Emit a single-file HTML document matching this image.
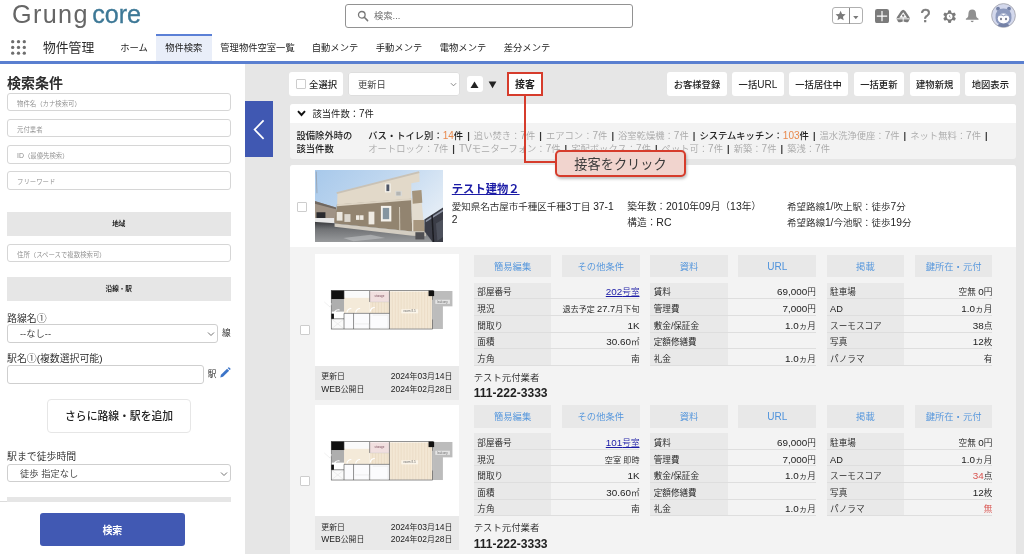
<!DOCTYPE html>
<html lang="ja">
<head>
<meta charset="utf-8">
<title>物件管理</title>
<style>
*{box-sizing:border-box;margin:0;padding:0}
html,body{width:1024px;height:554px;overflow:hidden;background:#fff}
body{font-family:"Liberation Sans","Noto Sans CJK JP",sans-serif;color:#222;font-size:9.3px;position:relative;font-weight:350}
.abs{position:absolute}
/* header */
#logo{left:11.9px;top:-1.1px;font-size:25.2px;letter-spacing:1.4px;color:#666;white-space:nowrap;line-height:30px}
#logo b{font-weight:normal;color:#3d7896;-webkit-text-stroke:0.3px #3d7896;margin-left:3.4px;letter-spacing:-0.1px}
#search{left:345px;top:4px;width:288px;height:23.5px;border:1px solid #929292;border-radius:3px;background:#fff}
#search span{position:absolute;left:28px;top:5px;font-size:9.3px;color:#666;line-height:12px}
#nav{left:0;top:34px;width:1024px;height:27px;white-space:nowrap}
#nav .app{position:absolute;left:43px;top:3.5px;font-size:12.8px;line-height:20px;color:#2a2a2a;font-weight:400}
#nav .tab{position:absolute;top:0;height:27px;line-height:29px;font-size:9.3px;color:#222;font-weight:400;text-align:center}
#nav .tab.act{background:#e9eef9;border-top:2px solid #5b80d6;line-height:25px}
#blueline{left:0;top:60.5px;width:1024px;height:3.2px;background:#5a7fd0}
/* left */
#left{left:0;top:63.5px;width:245px;height:491px;background:#fff}
#main{left:245px;top:63.5px;width:779px;height:491px;background:#e6e6e6}
.inp{position:absolute;left:7px;width:223.5px;height:18.4px;border:1px solid #d6d6d6;border-radius:3px;background:#fff;font-size:6.4px;color:#8a8a8a;line-height:19.8px;padding-left:9px}
.ghead{position:absolute;left:7px;width:223.5px;height:23.7px;background:#e6e6e6;text-align:center;font-size:6.6px;font-weight:bold;line-height:23.7px;color:#222}
.lbl{position:absolute;left:7px;font-size:9.9px;line-height:13px;color:#222;white-space:nowrap}
.sel{position:absolute;left:7px;height:17.8px;border:1px solid #cfcfcf;border-radius:3px;background:#fff;font-size:9.3px;line-height:15.8px;color:#333;padding-left:12px}
.chev{position:absolute;right:2.2px;top:5.2px;width:8px;height:8px}
/* main */
.btn{position:absolute;top:72.3px;height:23.7px;background:#fff;border-radius:3px;font-size:9.3px;font-weight:500;color:#222;text-align:center;line-height:26.5px;white-space:nowrap}
.panel{position:absolute;left:289.6px;width:726px}
.cb{position:absolute;width:10px;height:10px;border:1px solid #cdcdcd;background:#fff;border-radius:1px}
.rb{position:absolute;width:77.8px;height:22.3px;background:#e8e8e8;color:#4f93dc;font-size:9.3px;text-align:center;line-height:24.3px;white-space:nowrap}
.tbl{position:absolute;width:165.8px}
.tbl .r{position:relative;height:16.65px;border-bottom:1px solid #dedede;line-height:15.6px;font-size:8.6px;color:#222;white-space:nowrap}
.tbl .r .k{position:absolute;left:0;top:0;width:77.8px;height:15.65px;background:#e9e9e9;padding-left:3.6px;padding-top:2.7px}
.tbl .r .v{position:absolute;right:0;top:0;text-align:right;padding-top:2.7px}
a.lk{color:#1b1ba6;text-decoration:underline}
.red{color:#d9534f}
.org{color:#e8884c}
.l{font-size:1.08em;line-height:1}
.tbl .v .l{font-size:1.15em}
.gry{color:#a9a9a9}
.gry i{font-style:normal;color:#333;font-weight:bold}
.k2{color:#222;font-weight:500}
</style>
</head>
<body>
<div id="root" style="position:absolute;left:0;top:0;width:1024px;height:554px;overflow:hidden;will-change:transform">
<!-- HEADER -->
<div id="logo" class="abs">Grung<b>core</b></div>
<div id="search" class="abs">
<svg class="abs" style="left:11px;top:5px" width="12" height="12" viewBox="0 0 12 12"><circle cx="4.8" cy="4.8" r="3.3" fill="none" stroke="#777" stroke-width="1.3"/><path d="M7.3 7.3 L10.6 10.6" stroke="#777" stroke-width="1.5" stroke-linecap="round"/></svg>
<span>検索...</span></div>
<div class="abs" style="left:832.3px;top:7.4px;width:30.6px;height:17.1px;border:1px solid #b0b0b0;border-radius:3px;background:#fff"></div>
<div class="abs" style="left:849px;top:7.6px;width:1px;height:16.6px;background:#8a8a8a"></div>
<svg class="abs" style="left:835.3px;top:10.3px" width="11.2" height="11.2" viewBox="0 0 24 24"><path d="M12 1.5 L15.1 8.6 L22.8 9.3 L17 14.4 L18.7 22 L12 18 L5.3 22 L7 14.4 L1.2 9.3 L8.9 8.6 Z" fill="#7a7a7a"/></svg>
<svg class="abs" style="left:853.2px;top:15.6px" width="5.6" height="3.2" viewBox="0 0 10 6"><path d="M0 0 H10 L5 6 Z" fill="#7a7a7a"/></svg>
<svg class="abs" style="left:874.5px;top:8.8px" width="14" height="14.2" viewBox="0 0 14 14"><rect width="14" height="14" rx="2.2" fill="#7b7b7b"/><path d="M7 1.8 V12.2 M1.8 7 H12.200" stroke="#fff" stroke-width="1.2"/></svg>
<svg class="abs" style="left:896px;top:9px" width="14.4" height="14" viewBox="0 0 28 27"><path d="M14 1.2 Q16 1.2 18.5 4.5 L26 15.5 Q27.5 18 26 21 L24 24.5 Q22.5 26 20 25.5 L14 24 L8 25.5 Q5.500 26 4 24.500 L2 21 Q0.5 18 2 15.5 L9.5 4.5 Q12 1.2 14 1.200 Z" fill="#7b7b7b"/><path d="M14 6 L21.500 17 H6.5 Z" fill="#fff"/><path d="M2 19 H26" stroke="#fff" stroke-width="1.800"/><path d="M14 17 V25" stroke="#fff" stroke-width="1.800"/><circle cx="14" cy="13" r="2.200" fill="#7b7b7b"/></svg>
<div class="abs" style="left:920.6px;top:6.3px;font-size:17.8px;line-height:20px;color:#7b7b7b;-webkit-text-stroke:0.55px #7b7b7b;font-family:'Liberation Sans',sans-serif">?</div>
<svg class="abs" style="left:942.6px;top:9.6px" width="13.2" height="13.2" viewBox="0 0 24 24"><path d="M12 0.500 L14.5 1 L15.2 4.400 L17.500 5.700 L20.800 4.600 L22.500 6.700 L23.300 9 L20.700 11.200 V12.800 L23.300 15 L22.500 17.300 L20.800 19.400 L17.500 18.300 L15.200 19.600 L14.500 23 L12 23.500 L9.500 23 L8.800 19.600 L6.500 18.300 L3.200 19.400 L1.500 17.300 L0.700 15 L3.300 12.800 V11.200 L0.700 9 L1.500 6.700 L3.200 4.600 L6.500 5.700 L8.800 4.400 L9.500 1 Z" fill="#7b7b7b"/><circle cx="12" cy="12" r="5.200" fill="#fff"/><path d="M12 9.800 V12.300 L13.600 13.400" stroke="#7b7b7b" stroke-width="1.500" fill="none"/></svg>
<svg class="abs" style="left:965px;top:9px" width="14.4" height="13.800" viewBox="0 0 26 25"><path d="M13 0.800 Q19.500 0.800 19.800 8 L20.200 13 Q20.500 15.500 24.500 17.800 V19.500 H1.500 V17.800 Q5.500 15.500 5.800 13 L6.200 8 Q6.500 0.800 13 0.800 Z" fill="#909090"/><path d="M10.200 21.500 H15.800 Q15.500 24 13 24 Q10.500 24 10.200 21.500 Z" fill="#8a8a8a"/></svg>
<svg class="abs" style="left:991px;top:2.600px" width="25" height="25" viewBox="0 0 50 50"><circle cx="25" cy="25" r="23.800" fill="#d3d8ec" stroke="#a2a2aa" stroke-width="1.600"/><clipPath id="avc"><circle cx="25" cy="25" r="23"/></clipPath><g clip-path="url(#avc)"><circle cx="14" cy="11.500" r="3.800" fill="#7481a6"/><circle cx="36" cy="11.500" r="3.800" fill="#7481a6"/><path d="M9 30 Q8 11 25 11 Q42 11 41 30 Q41 44 25 44 Q9 44 9 30 Z" fill="#8c99bd"/><path d="M12 50 Q12 40 25 40 Q38 40 38 50 Z" fill="#7481a6"/><ellipse cx="25" cy="31" rx="11.500" ry="10" fill="#fdfdff"/><path d="M14 27 Q19 19 25 25 Q31 19 36 27 Q30 23 25 27 Q20 23 14 27 Z" fill="#8c99bd"/><ellipse cx="20" cy="32" rx="1.400" ry="2.400" fill="#333a55"/><ellipse cx="30" cy="32" rx="1.400" ry="2.400" fill="#333a55"/></g></svg>
<div id="nav" class="abs">
<svg class="abs" style="left:11.3px;top:5.5px" width="15" height="15" viewBox="0 0 15 15" fill="#6e6e6e"><circle cx="1.7" cy="1.7" r="1.65"/><circle cx="7.5" cy="1.7" r="1.65"/><circle cx="13.299999999999999" cy="1.7" r="1.65"/><circle cx="1.7" cy="7.45" r="1.65"/><circle cx="7.5" cy="7.45" r="1.65"/><circle cx="13.299999999999999" cy="7.45" r="1.65"/><circle cx="1.7" cy="13.2" r="1.65"/><circle cx="7.5" cy="13.2" r="1.65"/><circle cx="13.299999999999999" cy="13.2" r="1.65"/></svg>
<div class="app">物件管理</div>
<div class="tab" style="left:112px;width:44px">ホーム</div>
<div class="tab act" style="left:156px;width:55.5px">物件検索</div>
<div class="tab" style="left:212px;width:91px">管理物件空室一覧</div>
<div class="tab" style="left:303px;width:64px">自動メンテ</div>
<div class="tab" style="left:367px;width:64px">手動メンテ</div>
<div class="tab" style="left:431px;width:64px">電物メンテ</div>
<div class="tab" style="left:495px;width:64px">差分メンテ</div>
</div>
<div id="blueline" class="abs"></div>

<!-- LEFT -->
<div id="left" class="abs"></div>
<div id="main" class="abs"></div>


<div class="abs" style="left:7px;top:74px;font-size:14px;font-weight:bold;line-height:18px;color:#2e2e2e">検索条件</div>
<div class="inp" style="top:93px">物件名（カナ検索可）</div>
<div class="inp" style="top:119.1px">元付業者</div>
<div class="inp" style="top:145.2px"><span class="l">ID</span>（最優先検索）</div>
<div class="inp" style="top:171.2px">フリーワード</div>
<div class="ghead" style="top:212px">地域</div>
<div class="inp" style="top:243.7px;height:18px;line-height:19.4px">住所（スペースで複数検索可）</div>
<div class="ghead" style="top:277.2px">沿線・駅</div>
<div class="lbl" style="top:311.5px">路線名①</div>
<div class="sel" style="top:324.2px;width:211px;height:18.6px;line-height:18.1px">--なし--<svg class="chev" viewBox="0 0 8 8"><path d="M1 2.5 L4 5.500 L7 2.5" fill="none" stroke="#6a6a6a" stroke-width="0.95"/></svg></div>
<div class="abs" style="left:222px;top:327.2px;font-size:8.7px;line-height:13px">線</div>
<div class="lbl" style="top:351.8px">駅名①(複数選択可能)</div>
<div class="sel" style="top:365.2px;width:196.5px;height:18.5px"></div>
<div class="abs" style="left:207.8px;top:368.3px;font-size:8.7px;line-height:13px">駅</div>
<svg class="abs" style="left:219.3px;top:367.3px" width="11.8" height="11.8" viewBox="0 0 14 14"><path d="M1.5 12.5 L2.3 9.3 L9.6 2 L12 4.4 L4.7 11.7 Z" fill="#3b74c8"/><path d="M10.3 1.3 L11.1 0.5 Q11.6 0 12.1 0.5 L13.5 1.9 Q14 2.4 13.5 2.9 L12.7 3.7 Z" fill="#3b74c8"/></svg>
<div class="abs" style="left:47.3px;top:398.5px;width:143.5px;height:34.9px;border:1px solid #e6e6e6;border-radius:4px;background:#fff;text-align:center;font-size:10.8px;font-weight:500;line-height:33.4px;color:#222">さらに路線・駅を追加</div>
<div class="lbl" style="top:449.6px">駅まで徒歩時間</div>
<div class="sel" style="top:463.6px;width:223.8px;height:18.4px;line-height:19.4px">徒歩 指定なし<svg class="chev" viewBox="0 0 8 8"><path d="M1 2.5 L4 5.500 L7 2.5" fill="none" stroke="#6a6a6a" stroke-width="0.95"/></svg></div>
<div class="abs" style="left:0;top:501px;width:8px;height:1px;background:#dcdcdc"></div>
<div class="abs" style="left:7px;top:496.5px;width:223.8px;height:5.3px;background:#e6e6e6"></div>
<div class="abs" style="left:0;top:501.8px;width:245px;height:52.2px;background:#fff"></div>
<div class="abs" style="left:40.2px;top:512.8px;width:144.4px;height:33.2px;background:#4159b3;border-radius:3px;color:#fff;text-align:center;font-size:10px;font-weight:bold;line-height:35.2px">検索</div>


<!-- toolbar -->
<div class="abs" style="left:245.2px;top:100.6px;width:28.3px;height:56.3px;background:#4058b2"><svg class="abs" style="left:7px;top:17px" width="14" height="24" viewBox="0 0 14 24"><path d="M11.6 2.4 L2.6 11.6 L11.6 20.8" fill="none" stroke="#fff" stroke-width="1.7"/></svg></div>
<div class="btn" style="left:289.3px;width:54px"><div class="cb" style="left:6.4px;top:7.2px"></div><span style="position:absolute;left:19.8px;top:0">全選択</span></div>
<div class="btn" style="left:348.4px;width:112px;text-align:left;padding-left:9.500px;font-weight:normal;color:#444;box-shadow:inset 0 0 0 1px #dedede">更新日<svg class="abs" style="right:3px;top:8.5px" width="7" height="7" viewBox="0 0 8 8"><path d="M1 2.5 L4 5.5 L7 2.5" fill="none" stroke="#777" stroke-width="1"/></svg></div>
<div class="btn" style="left:466.8px;top:76.3px;height:16.1px;width:16.2px;font-size:11.2px;line-height:17.6px"><span style="display:inline-block;transform:scaleX(1.22)">▲</span></div>
<div class="btn" style="left:484.9px;top:76.3px;height:16.1px;width:16.2px;font-size:11.2px;line-height:17.3px;background:transparent"><span style="display:inline-block;transform:scaleX(1.18)">▼</span></div>
<div class="btn" style="left:508.5px;width:33px;font-weight:bold;font-size:9.9px">接客</div>
<div class="btn" style="left:667.1px;width:59.7px">お客様登録</div>
<div class="btn" style="left:732.2px;width:51.5px">一括<span class="l">URL</span></div>
<div class="btn" style="left:788.7px;width:59.7px">一括居住中</div>
<div class="btn" style="left:853.7px;width:50.3px">一括更新</div>
<div class="btn" style="left:909.5px;width:50.3px">建物新規</div>
<div class="btn" style="left:965.1px;width:50.5px">地図表示</div>
<!-- summary panel -->
<div class="panel" style="top:103.6px;height:55.8px;background:#f3f3f3;border-radius:3px;overflow:hidden"><div style="height:19.2px;background:#fff"></div></div>
<svg class="abs" style="left:296.5px;top:109.5px" width="9" height="7" viewBox="0 0 9 7"><path d="M1 1.2 L4.5 5 L8 1.2" fill="none" stroke="#111" stroke-width="1.9"/></svg>
<div class="abs" style="left:312.5px;top:108px;font-size:9.3px;line-height:13px;color:#222;font-weight:400;white-space:nowrap">該当件数：<span class="l">7</span>件</div>
<div class="abs" style="left:296.5px;top:129.9px;font-size:9.3px;line-height:12.7px;color:#222;font-weight:500;white-space:nowrap">設備除外時の<br>該当件数</div>
<div class="abs gry" style="left:368.3px;top:129.9px;font-size:9.3px;line-height:12.7px;white-space:nowrap;word-spacing:1.45px"><span class="k2">バス・トイレ別：<span class="org"><span class="l">14</span></span>件</span> <i>|</i> 追い焚き：<span class="l">7</span>件 <i>|</i> エアコン：<span class="l">7</span>件 <i>|</i> 浴室乾燥機：<span class="l">7</span>件 <i>|</i> <span class="k2">システムキッチン：<span class="org"><span class="l">103</span></span>件</span> <i>|</i> 温水洗浄便座：<span class="l">7</span>件 <i>|</i> ネット無料：<span class="l">7</span>件 <i>|</i><br>オートロック：<span class="l">7</span>件 <i>|</i> <span class="l">TV</span>モニターフォン：<span class="l">7</span>件 <i>|</i> 宅配ボックス：<span class="l">7</span>件 <i>|</i> ペット可：<span class="l">7</span>件 <i>|</i> 新築：<span class="l">7</span>件 <i>|</i> 築浅：<span class="l">7</span>件</div>
<!-- building panel -->
<div class="panel" style="top:164.9px;height:400px;background:#f3f3f3;border-radius:3px 3px 0 0;overflow:hidden"><div style="height:82.4px;background:#fff"></div></div>
<div class="cb" style="left:297.3px;top:201.6px"></div>
<svg class="abs" style="left:314.7px;top:170.2px" width="128.2" height="71.6" viewBox="35 30 885 495" preserveAspectRatio="none">
<defs><linearGradient id="sky" x1="0" y1="0" x2="1" y2="0.55"><stop offset="0" stop-color="#a3c6ea"/><stop offset="0.55" stop-color="#c3d9f0"/><stop offset="1" stop-color="#e9f0f7"/></linearGradient>
<linearGradient id="road" x1="0" y1="0" x2="0" y2="1"><stop offset="0" stop-color="#38393c"/><stop offset="0.3" stop-color="#707275"/><stop offset="1" stop-color="#a6a8aa"/></linearGradient>
<filter id="pblur" x="-10%" y="-10%" width="120%" height="120%"><feGaussianBlur stdDeviation="2.6"/></filter></defs>
<g filter="url(#pblur)">
<rect x="-20" y="-20" width="1000" height="600" fill="url(#sky)"/>
<path d="M-20 228 L180 290 L180 395 L-20 390Z" fill="#a09386"/>
<path d="M-20 228 L180 290 L180 302 L-20 248Z" fill="#6f6761"/>
<rect x="45" y="322" width="62" height="42" fill="#2c2c2e"/>
<rect x="-20" y="362" width="187" height="34" fill="#e8e8e8"/>
<path d="M-20 386 L170 398 L705 455 L800 460 L870 560 L-20 560Z" fill="url(#road)"/>
<path d="M230 500 L420 478 L520 500 L300 522Z" fill="#c4c6c8" opacity=".55"/>
<path d="M190 188 L755 45 L757 112 L700 122 L700 230 L188 270Z" fill="#e2d9c9"/>
<path d="M183 184 L752 38 L757 50 L186 196Z" fill="#c9c2b6"/>
<path d="M186 268 L700 228 L706 456 L170 400Z" fill="#928470"/>
<path d="M186 266 L700 226 L700 240 L186 280Z" fill="#ddd4c4"/>
<path d="M700 228 L772 258 L792 456 L706 456Z" fill="#e3dccf"/>
<path d="M705 176 L770 168 L776 256 L710 264Z" fill="#a5957d"/>
<path d="M714 375 L788 375 L795 456 L714 456Z" fill="#a8977f"/>
<path d="M170 400 L706 456 L800 460 L800 488 L706 484 L170 422Z" fill="#d3cdc2"/>
<rect x="518" y="123" width="40" height="62" fill="#f4f1ea"/><rect x="528" y="130" width="20" height="46" fill="#4f5666"/>
<rect x="590" y="175" width="46" height="36" fill="#dadad6"/><rect x="596" y="180" width="30" height="26" fill="#b4b5b3"/>
<rect x="490" y="278" width="72" height="108" fill="#f5f2ec"/><rect x="503" y="292" width="44" height="78" fill="#8595a0"/>
<rect x="405" y="318" width="40" height="88" fill="#efebe3"/>
<rect x="318" y="343" width="24" height="32" fill="#efebe3"/><rect x="346" y="343" width="24" height="32" fill="#efebe3"/>
<rect x="185" y="320" width="40" height="60" fill="#ebe7df"/><rect x="238" y="335" width="42" height="54" fill="#ddd8cf"/>
<path d="M615 285 L622 285 L624 450 L617 450Z" fill="#cfc6b6"/>
<rect x="728" y="460" width="62" height="50" fill="#505053"/>
<path d="M790 372 L940 275 L940 560 L870 560 L792 456Z" fill="#3a3d46"/>
<path d="M800 380 L940 290 L940 304 L800 392Z" fill="#9096a6"/>
<path d="M838 345 L848 340 L860 560 L850 560Z" fill="#1c1d22"/>
<path d="M870 400 L940 360 L940 480 L880 520Z" fill="#5b5f6b" opacity=".6"/>
<path d="M40 40 L47 40 L52 190 L45 190Z" fill="#8a8d92" opacity=".55"/>
</g>
</svg>
<div class="abs" style="left:451.8px;top:180.5px;font-size:11.3px;font-weight:bold;line-height:16px;white-space:nowrap"><a class="lk">テスト建物２</a></div>
<div class="abs" style="left:451.8px;top:200.3px;width:168px;font-size:9.5px;line-height:13px;color:#222">愛知県名古屋市千種区千種<span class="l">3</span>丁目 <span class="l">37-1</span><br><span class="l">2</span></div>
<div class="abs" style="left:627.3px;top:199px;font-size:9.7px;line-height:16px;color:#222;white-space:nowrap">築年数：<span class="l">2010</span>年<span class="l">09</span>月（<span class="l">13</span>年）<br>構造：<span class="l">RC</span></div>
<div class="abs" style="left:786.9px;top:199px;font-size:9.5px;line-height:16px;color:#222;white-space:nowrap">希望路線<span class="l">1/</span>吹上駅：徒歩<span class="l">7</span>分<br>希望路線<span class="l">1/</span>今池駅：徒歩<span class="l">19</span>分</div>
<div class="abs" style="left:314.5px;top:254.2px;width:144.6px;height:111.6px;background:#fff"></div><svg class="abs" style="left:314px;top:280.0px" width="150" height="60" viewBox="0 0 1024 410" preserveAspectRatio="none" font-family="Liberation Sans, sans-serif">
<rect x="805" y="75" width="140" height="105" fill="#bcbcbc"/><rect x="805" y="178" width="75" height="157" fill="#bcbcbc"/>
<rect x="515" y="78" width="293" height="255" fill="#f3e7d4"/><rect x="380" y="150" width="137" height="78" fill="#f2e5d1"/>
<g stroke="#e3d2b8" stroke-width="3"><path d="M535 80V332M555 80V332M575 80V332M595 80V332M615 80V332M635 80V332M655 80V332M675 80V332M695 80V332M715 80V332M735 80V332M755 80V332M775 80V332M795 80V332M400 152V226M420 152V226M440 152V226M460 152V226M480 152V226M500 152V226"/></g>
<rect x="205" y="120" width="175" height="106" fill="#f4ead9"/>
<rect x="380" y="78" width="135" height="72" fill="#f1dfdf"/>
<rect x="215" y="78" width="162" height="42" fill="#fafafa"/>
<rect x="120" y="130" width="85" height="86" fill="#aeaeae"/>
<rect x="205" y="228" width="310" height="105" fill="#fbfbfd"/>
<rect x="120" y="265" width="85" height="68" fill="#fafafa"/>
<path d="M124 270L200 330M200 270L124 330" stroke="#ccc" stroke-width="2"/>
<rect x="118" y="72" width="692" height="263" fill="none" stroke="#5a5a5a" stroke-width="4.500"/><path d="M810 135V270" stroke="#d8d8d8" stroke-width="5"/>
<rect x="118" y="72" width="87" height="58" fill="#111"/>
<rect x="782" y="72" width="38" height="38" fill="#111"/>
<rect x="118" y="230" width="18" height="36" fill="#111"/>
<path d="M205 228H515M515 75V335M380 75V150M270 228V335M380 228V335M205 228V335M120 265H205M205 75V130" stroke="#444" stroke-width="4" fill="none"/>
<path d="M380 150H515" stroke="#bbb" stroke-width="2"/>
<path d="M280 300H375V330M400 240H505V330H450" stroke="#ddd" stroke-width="3" fill="none"/>
<path d="M225 222A28 28 0 0 1 255 195M285 222A28 28 0 0 1 315 195M385 215A28 28 0 0 1 415 188M140 222A28 28 0 0 1 175 205" stroke="#fff" stroke-width="8" fill="none"/>
<path d="M70 150L110 185L120 160" stroke="#ddd" stroke-width="3" fill="#fff"/>
<rect x="596" y="200" width="115" height="28" fill="#fbf5ea"/>
<text x="653" y="221" font-size="21" fill="#666" text-anchor="middle">room 8.5</text>
<text x="447" y="119" font-size="20" fill="#7a4a5a" text-anchor="middle">storage</text>
<rect x="828" y="135" width="100" height="28" fill="#e4e4e4"/>
<text x="878" y="156" font-size="20" fill="#666" text-anchor="middle">balcony</text>
</svg><div class="abs" style="left:314.5px;top:365.8px;width:144.6px;height:33.9px;background:#e9e9e9;font-size:7.9px;line-height:12.6px;color:#222;padding:5.5px 6.8px 0 6.8px"><div style="display:flex;justify-content:space-between"><span>更新日</span><span><span class="l">2024</span>年<span class="l">03</span>月<span class="l">14</span>日</span></div><div style="display:flex;justify-content:space-between"><span><span class="l">WEB</span>公開日</span><span><span class="l">2024</span>年<span class="l">02</span>月<span class="l">28</span>日</span></div></div><div class="cb" style="left:299.7px;top:325.3px"></div><div class="rb" style="left:473.7px;top:254.8px">簡易編集</div><div class="rb" style="left:561.9px;top:254.8px">その他条件</div><div class="rb" style="left:650.1px;top:254.8px">資料</div><div class="rb" style="left:738.3px;top:254.8px"><span class="l">URL</span></div><div class="rb" style="left:826.5px;top:254.8px">掲載</div><div class="rb" style="left:914.7px;top:254.8px">鍵所在・元付</div><div class="tbl" style="left:473.7px;top:282.7px"><div class="r"><div class="k">部屋番号</div><div class="v"><a class="lk"><span class="l">202</span>号室</a></div></div><div class="r"><div class="k">現況</div><div class="v"><span style="font-size:8.1px">退去予定 <span class="l">27.7</span>月下旬</span></div></div><div class="r"><div class="k">間取り</div><div class="v"><span class="l">1K</span></div></div><div class="r"><div class="k">面積</div><div class="v"><span class="l">30.60</span>㎡</div></div><div class="r"><div class="k">方角</div><div class="v">南</div></div></div><div class="tbl" style="left:650.1px;top:282.7px"><div class="r"><div class="k">賃料</div><div class="v"><span class="l">69,000</span>円</div></div><div class="r"><div class="k">管理費</div><div class="v"><span class="l">7,000</span>円</div></div><div class="r"><div class="k">敷金/保証金</div><div class="v"><span class="l">1.0</span>ヵ月</div></div><div class="r"><div class="k">定額修繕費</div><div class="v"></div></div><div class="r"><div class="k">礼金</div><div class="v"><span class="l">1.0</span>ヵ月</div></div></div><div class="tbl" style="left:826.5px;top:282.7px"><div class="r"><div class="k">駐車場</div><div class="v">空無 <span class="l">0</span>円</div></div><div class="r"><div class="k"><span class="l">AD</span></div><div class="v"><span class="l">1.0</span>ヵ月</div></div><div class="r"><div class="k">スーモスコア</div><div class="v"><span class="l">38</span>点</div></div><div class="r"><div class="k">写真</div><div class="v"><span class="l">12</span>枚</div></div><div class="r"><div class="k">パノラマ</div><div class="v">有</div></div></div><div class="abs" style="left:473.7px;top:370.6px;font-size:9.4px;line-height:13px;color:#222;white-space:nowrap">テスト元付業者</div><div class="abs" style="left:473.7px;top:386.3px;font-size:11.2px;font-weight:bold;line-height:15px;color:#222;white-space:nowrap"><span class="l">111-222-3333</span></div><div class="abs" style="left:314.5px;top:404.7px;width:144.6px;height:111.6px;background:#fff"></div><svg class="abs" style="left:314px;top:430.5px" width="150" height="60" viewBox="0 0 1024 410" preserveAspectRatio="none" font-family="Liberation Sans, sans-serif">
<rect x="805" y="75" width="140" height="105" fill="#bcbcbc"/><rect x="805" y="178" width="75" height="157" fill="#bcbcbc"/>
<rect x="515" y="78" width="293" height="255" fill="#f3e7d4"/><rect x="380" y="150" width="137" height="78" fill="#f2e5d1"/>
<g stroke="#e3d2b8" stroke-width="3"><path d="M535 80V332M555 80V332M575 80V332M595 80V332M615 80V332M635 80V332M655 80V332M675 80V332M695 80V332M715 80V332M735 80V332M755 80V332M775 80V332M795 80V332M400 152V226M420 152V226M440 152V226M460 152V226M480 152V226M500 152V226"/></g>
<rect x="205" y="120" width="175" height="106" fill="#f4ead9"/>
<rect x="380" y="78" width="135" height="72" fill="#f1dfdf"/>
<rect x="215" y="78" width="162" height="42" fill="#fafafa"/>
<rect x="120" y="130" width="85" height="86" fill="#aeaeae"/>
<rect x="205" y="228" width="310" height="105" fill="#fbfbfd"/>
<rect x="120" y="265" width="85" height="68" fill="#fafafa"/>
<path d="M124 270L200 330M200 270L124 330" stroke="#ccc" stroke-width="2"/>
<rect x="118" y="72" width="692" height="263" fill="none" stroke="#5a5a5a" stroke-width="4.500"/><path d="M810 135V270" stroke="#d8d8d8" stroke-width="5"/>
<rect x="118" y="72" width="87" height="58" fill="#111"/>
<rect x="782" y="72" width="38" height="38" fill="#111"/>
<rect x="118" y="230" width="18" height="36" fill="#111"/>
<path d="M205 228H515M515 75V335M380 75V150M270 228V335M380 228V335M205 228V335M120 265H205M205 75V130" stroke="#444" stroke-width="4" fill="none"/>
<path d="M380 150H515" stroke="#bbb" stroke-width="2"/>
<path d="M280 300H375V330M400 240H505V330H450" stroke="#ddd" stroke-width="3" fill="none"/>
<path d="M225 222A28 28 0 0 1 255 195M285 222A28 28 0 0 1 315 195M385 215A28 28 0 0 1 415 188M140 222A28 28 0 0 1 175 205" stroke="#fff" stroke-width="8" fill="none"/>
<path d="M70 150L110 185L120 160" stroke="#ddd" stroke-width="3" fill="#fff"/>
<rect x="596" y="200" width="115" height="28" fill="#fbf5ea"/>
<text x="653" y="221" font-size="21" fill="#666" text-anchor="middle">room 8.5</text>
<text x="447" y="119" font-size="20" fill="#7a4a5a" text-anchor="middle">storage</text>
<rect x="828" y="135" width="100" height="28" fill="#e4e4e4"/>
<text x="878" y="156" font-size="20" fill="#666" text-anchor="middle">balcony</text>
</svg><div class="abs" style="left:314.5px;top:516.3px;width:144.6px;height:33.9px;background:#e9e9e9;font-size:7.9px;line-height:12.6px;color:#222;padding:5.5px 6.8px 0 6.8px"><div style="display:flex;justify-content:space-between"><span>更新日</span><span><span class="l">2024</span>年<span class="l">03</span>月<span class="l">14</span>日</span></div><div style="display:flex;justify-content:space-between"><span><span class="l">WEB</span>公開日</span><span><span class="l">2024</span>年<span class="l">02</span>月<span class="l">28</span>日</span></div></div><div class="cb" style="left:299.7px;top:475.8px"></div><div class="rb" style="left:473.7px;top:405.3px">簡易編集</div><div class="rb" style="left:561.9px;top:405.3px">その他条件</div><div class="rb" style="left:650.1px;top:405.3px">資料</div><div class="rb" style="left:738.3px;top:405.3px"><span class="l">URL</span></div><div class="rb" style="left:826.5px;top:405.3px">掲載</div><div class="rb" style="left:914.7px;top:405.3px">鍵所在・元付</div><div class="tbl" style="left:473.7px;top:433.2px"><div class="r"><div class="k">部屋番号</div><div class="v"><a class="lk"><span class="l">101</span>号室</a></div></div><div class="r"><div class="k">現況</div><div class="v"><span style="font-size:8.1px">空室 即時</span></div></div><div class="r"><div class="k">間取り</div><div class="v"><span class="l">1K</span></div></div><div class="r"><div class="k">面積</div><div class="v"><span class="l">30.60</span>㎡</div></div><div class="r"><div class="k">方角</div><div class="v">南</div></div></div><div class="tbl" style="left:650.1px;top:433.2px"><div class="r"><div class="k">賃料</div><div class="v"><span class="l">69,000</span>円</div></div><div class="r"><div class="k">管理費</div><div class="v"><span class="l">7,000</span>円</div></div><div class="r"><div class="k">敷金/保証金</div><div class="v"><span class="l">1.0</span>ヵ月</div></div><div class="r"><div class="k">定額修繕費</div><div class="v"></div></div><div class="r"><div class="k">礼金</div><div class="v"><span class="l">1.0</span>ヵ月</div></div></div><div class="tbl" style="left:826.5px;top:433.2px"><div class="r"><div class="k">駐車場</div><div class="v">空無 <span class="l">0</span>円</div></div><div class="r"><div class="k"><span class="l">AD</span></div><div class="v"><span class="l">1.0</span>ヵ月</div></div><div class="r"><div class="k">スーモスコア</div><div class="v"><span class="red"><span class="l">34</span></span>点</div></div><div class="r"><div class="k">写真</div><div class="v"><span class="l">12</span>枚</div></div><div class="r"><div class="k">パノラマ</div><div class="v"><span class="red">無</span></div></div></div><div class="abs" style="left:473.7px;top:521.2px;font-size:9.4px;line-height:13px;color:#222;white-space:nowrap">テスト元付業者</div><div class="abs" style="left:473.7px;top:536.9px;font-size:11.2px;font-weight:bold;line-height:15px;color:#222;white-space:nowrap"><span class="l">111-222-3333</span></div>

<div class="abs" style="left:506.7px;top:72px;width:36.4px;height:23.5px;border:2px solid #d63c2c"></div>
<div class="abs" style="left:523.8px;top:96px;width:2.2px;height:67.4px;background:#d63c2c"></div>
<div class="abs" style="left:523.8px;top:161.3px;width:33px;height:2.1px;background:#d63c2c"></div>
<div class="abs" style="left:555px;top:150.3px;width:131px;height:27px;border:2px solid #d63c2c;border-radius:5px;background:#f1d4ce;box-shadow:1px 2px 3px rgba(0,0,0,.25);text-align:center;font-size:13.2px;line-height:25.6px;color:#3a3a3a;font-weight:400;white-space:nowrap">接客をクリック</div>

</div>
</body>
</html>
